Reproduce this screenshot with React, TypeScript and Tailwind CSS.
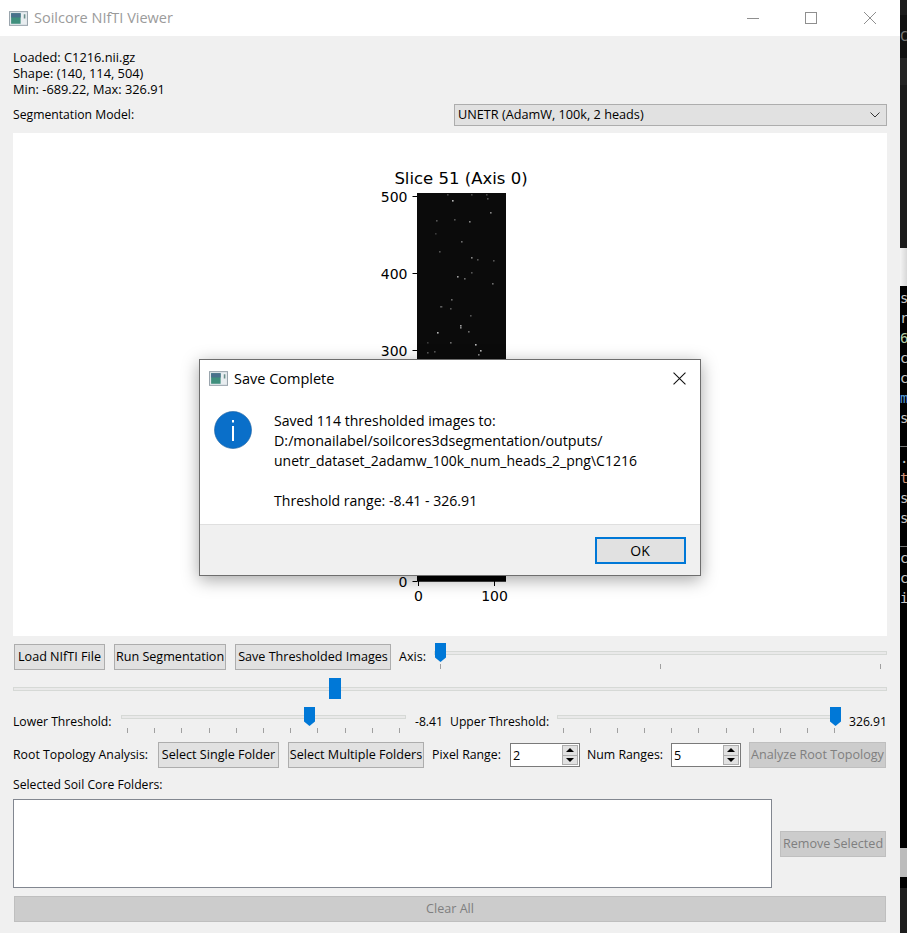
const ui = "font-['Open_Sans','Noto_Sans',sans-serif]";

const specks: [number, number, number][] = [
  [452, 200, 0.7], [447, 194, 0.25], [471, 194, 0.25], [487, 198, 0.3], [486, 194, 0.25],
  [490, 212, 0.5], [469, 221, 0.5], [436, 220, 0.3], [454, 219, 0.3], [461, 241, 0.4],
  [471, 257, 0.5], [435, 233, 0.2], [439, 251, 0.3], [477, 259, 0.3], [493, 260, 0.3],
  [457, 276, 0.6], [464, 278, 0.4], [471, 272, 0.3], [492, 283, 0.4], [440, 306, 0.3],
  [450, 308, 0.3], [451, 299, 0.4], [470, 315, 0.3], [460, 325, 0.6], [437, 332, 0.7],
  [468, 331, 0.4], [450, 342, 0.4], [475, 344, 0.7], [480, 350, 0.7], [478, 354, 0.5],
  [434, 351, 0.3], [427, 352, 0.3], [427, 342, 0.2], [460, 327, 0.5], [441, 306, 0.2],
];

const stripGlyphs = [
  ["s", "#c8c8c8"], ["r", "#c8c8c8"], ["6", "#b5cea8"], ["c", "#c8c8c8"],
  ["c", "#c8c8c8"], ["m", "#569cd6"], ["s", "#c8c8c8"], ["_", "#c8c8c8"],
  [".", "#c8c8c8"], ["t", "#ce9178"], ["s", "#c8c8c8"], ["s", "#c8c8c8"],
  ["_", "#c8c8c8"], ["c", "#c8c8c8"], ["c", "#c8c8c8"], ["i", "#c8c8c8"],
];

function WinIcon({ className }: { className: string }) {
  return (
    <svg viewBox="0 0 18 14" className={className}>
      <rect x="0.5" y="0.5" width="17" height="13" fill="#e8edf0" stroke="#9aa5ad" />
      <rect x="2" y="2" width="9" height="10" fill="#3f8f7d" />
      <rect x="2" y="2" width="9" height="4" fill="#49708c" />
      <rect x="14" y="3" width="1.5" height="4" fill="#6b8f8a" />
    </svg>
  );
}

function Plot() {
  const yTicks = [[196, "500"], [273, "400"], [350, "300"], [581, "0"]] as const;
  return (
    <svg className="block w-full h-[503px]" viewBox="13 133 874 503">
      <g fontFamily="'DejaVu Sans', sans-serif" fill="#000">
        <text x="461" y="184" fontSize="16.5" textAnchor="middle">Slice 51 (Axis 0)</text>
        <rect x="417" y="193" width="89" height="388.5" fill="#0b0b0b" />
        <rect x="417" y="575" width="89" height="6.5" fill="#000" />
        {specks.map(([x, y, o], i) => (
          <rect key={i} x={x} y={y} width="1.6" height="1.6" fill="#fff" opacity={o} />
        ))}
        {yTicks.map(([y, t]) => (
          <g key={t}>
            <line x1="412.5" x2="417" y1={y + 0.5} y2={y + 0.5} stroke="#000" />
            <text x="407.5" y={y + 6} fontSize="14" textAnchor="end">{t}</text>
          </g>
        ))}
        <line x1="418.5" x2="418.5" y1="581" y2="586" stroke="#000" />
        <line x1="494.5" x2="494.5" y1="581" y2="586" stroke="#000" />
        <text x="418.5" y="601" fontSize="14" textAnchor="middle">0</text>
        <text x="494.5" y="601" fontSize="14" textAnchor="middle">100</text>
      </g>
    </svg>
  );
}

function Btn({ label, className = "" }: { label: string; className?: string }) {
  return (
    <button className={`h-[26px] pt-px shrink-0 border border-[#adadad] bg-[#e1e1e1] text-[12.6px] text-black whitespace-nowrap ${className}`}>
      {label}
    </button>
  );
}

function DisabledBtn({ label, className = "" }: { label: string; className?: string }) {
  return (
    <button className={`h-[26px] pt-px shrink-0 border border-[#bfbfbf] bg-[#cccccc] text-[12.6px] text-[#7f7f7f] whitespace-nowrap ${className}`}>
      {label}
    </button>
  );
}

function Handle({ className = "" }: { className?: string }) {
  return (
    <svg viewBox="0 0 11 19" className={`w-[11px] h-[19px] ${className}`}>
      <path d="M0 0H11V14.5L5.5 19L0 14.5Z" fill="#0078d7" />
    </svg>
  );
}

function TickSlider({ ticks, handle, className = "" }: { ticks: number; handle: string; className?: string }) {
  return (
    <div className={`relative h-[28px] shrink-0 ${className}`}>
      <div className="mt-[8px] h-[4px] border border-[#d6d9d6] bg-[#e9e9e9]" />
      <div className="mt-[9px] flex justify-between px-[6px]">
        {Array.from(Array(ticks)).map((v, i) => (
          <span key={i} className="block w-px h-[5px] bg-[#a0a0a0]" />
        ))}
      </div>
      <Handle className={`absolute top-0 ${handle}`} />
    </div>
  );
}

function Spin({ value, className = "" }: { value: string; className?: string }) {
  return (
    <div className={`h-[24px] flex items-stretch border border-[#7a7a7a] bg-white ${className}`}>
      <span className="flex-1 pl-[2px] pt-px text-[12.6px] leading-[22px] text-black">{value}</span>
      <div className="w-[16px] flex flex-col my-[1px] mr-[1px] border border-[#adadad] bg-[#e1e1e1] divide-y divide-[#adadad]">
        <div className="flex-1 flex items-center justify-center">
          <svg viewBox="0 0 8 4" className="w-[8px] h-[4px]"><path d="M4 0L8 4H0Z" fill="#000" /></svg>
        </div>
        <div className="flex-1 flex items-center justify-center">
          <svg viewBox="0 0 8 4" className="w-[8px] h-[4px]"><path d="M0 0H8L4 4Z" fill="#000" /></svg>
        </div>
      </div>
    </div>
  );
}

function SaveDialog() {
  return (
    <div className="absolute left-[199px] top-[359px] w-[502px] h-[217px] flex flex-col border border-[#6e6e6e] bg-white shadow-[0_4px_16px_rgba(0,0,0,0.35)]">
      <div className="h-[37px] flex items-center pl-[9px] pr-[14px] shrink-0">
        <WinIcon className="w-[19px] h-[15px]" />
        <span className="ml-[6px] text-[14.5px] text-black">Save Complete</span>
        <svg viewBox="0 0 12 12" className="ml-auto w-[13px] h-[13px]">
          <path d="M0.5 0.5L11.5 11.5M11.5 0.5L0.5 11.5" stroke="#111" fill="none" />
        </svg>
      </div>
      <div className="flex-1 flex pl-[14px] pt-[14px]">
        <svg viewBox="0 0 38 38" className="w-[38px] h-[38px] shrink-0">
          <circle cx="19" cy="19" r="18.5" fill="#0a6fc9" stroke="#1b5f9f" strokeWidth="0.6" />
          <rect x="18" y="15" width="2" height="15" fill="#fff" />
          <rect x="18" y="9" width="2" height="2.5" fill="#fff" />
        </svg>
        <div className="ml-[22px] text-[14.1px] leading-[20px] text-black whitespace-pre">
          <div>Saved 114 thresholded images to:</div>
          <div className="text-[14.3px]">D:/monailabel/soilcores3dsegmentation/outputs/</div>
          <div className="text-[14px]">unetr_dataset_2adamw_100k_num_heads_2_png\C1216</div>
          <div className="h-[20px]" />
          <div>Threshold range: -8.41 - 326.91</div>
        </div>
      </div>
      <div className="h-[51px] shrink-0 flex items-center justify-end pr-[14px] border-t border-[#dfdfdf] bg-[#f0f0f0]">
        <button className="w-[91px] h-[27px] pr-px border-2 border-[#0078d7] bg-[#e1e1e1] text-[14px] text-black">OK</button>
      </div>
    </div>
  );
}

function BackWindowStrip() {
  return (
    <div className="relative w-[7px] h-full flex flex-col bg-black overflow-hidden font-['DejaVu_Sans_Mono',monospace]">
      <div className="h-[15px] bg-[#1c1c1c]" />
      <div className="h-[43px] bg-[#111111] text-[14px] leading-[42px] text-[#777777]">C</div>
      <div className="h-[28px] bg-[#242424]" />
      <div className="h-[164px] bg-[#1b1b1b]" />
      <div className="h-[38px] bg-gradient-to-r from-[#f4f4f4] to-[#d8d8d8]" />
      <div className="h-[2px]" />
      {stripGlyphs.map(([ch, color], i) => (
        <div key={i} className="h-[20px] shrink-0 text-[14px] leading-[20px] whitespace-pre" style={{ color }}>{ch}</div>
      ))}
      <div className="h-[240px] shrink-0 bg-black" />
      <div className="h-[29px] shrink-0 bg-[#bcbcbc]" />
      <div className="h-[11px] shrink-0 bg-black" />
      <div className="h-[45px] shrink-0 bg-[#1e1e1e]" />
    </div>
  );
}

export default function App() {
  return (
    <div className={`relative w-[907px] h-[933px] overflow-hidden flex bg-black ${ui}`}>
      <div className="w-[900px] h-full flex flex-col bg-[#f0f0f0]">
        <div className="h-[36px] shrink-0 flex items-center bg-white pl-[9px]">
          <WinIcon className="w-[19px] h-[15px]" />
          <span className="ml-[6px] text-[14.5px] text-[#9b9b9b]">Soilcore NIfTI Viewer</span>
          <div className="ml-auto flex items-center">
            <span className="block w-[12px] h-px bg-[#8f8f8f] mr-[46px]" />
            <span className="block w-[12px] h-[12px] border border-[#8f8f8f] mr-[47px]" />
            <svg viewBox="0 0 12 12" className="w-[12px] h-[12px] mr-[24px]">
              <path d="M0 0L12 12M12 0L0 12" stroke="#8f8f8f" fill="none" />
            </svg>
          </div>
        </div>
        <div className="flex-1 flex flex-col pl-[13px] pr-[13px]">
          <div className="pt-[13px] text-[12.8px] leading-[16px] text-black">
            <div>Loaded: C1216.nii.gz</div>
            <div>Shape: (140, 114, 504)</div>
            <div>Min: -689.22, Max: 326.91</div>
          </div>
          <div className="mt-[7px] h-[22px] flex items-center justify-between">
            <span className="text-[12.2px] text-black">Segmentation Model:</span>
            <div className="w-[433px] h-[22px] flex items-center justify-between border border-[#adadad] bg-[#e1e1e1] pl-[3px] pr-[6px] text-[12.7px] text-black">
              <span>UNETR (AdamW, 100k, 2 heads)</span>
              <svg viewBox="0 0 10 6" className="w-[10px] h-[6px]"><path d="M0.5 0.5L5 5L9.5 0.5" stroke="#333" fill="none" /></svg>
            </div>
          </div>
          <div className="mt-[7px] bg-white"><Plot /></div>

          <div className="mt-[8px] h-[26px] flex items-center">
            <Btn label="Load NIfTI File" className="ml-px w-[91px]" />
            <Btn label="Run Segmentation" className="ml-[9px] w-[112px]" />
            <Btn label="Save Thresholded Images" className="ml-[9px] w-[156px]" />
            <span className="ml-[8px] pt-px text-[12.6px] text-black">Axis:</span>
            <TickSlider ticks={3} handle="left-px" className="ml-auto w-[453px]" />
          </div>
          <div className="relative mt-[8px] h-[21px] flex items-center">
            <div className="w-full h-[4px] border border-[#d6d9d6] bg-[#e9e9e9]" />
            <span className="absolute left-[316px] top-0 w-[12px] h-[21px] bg-[#0078d7]" />
          </div>
          <div className="mt-[8px] h-[28px] flex items-center text-[12.2px] text-black">
            <span className="w-[108px] shrink-0 pt-[2px]">Lower Threshold:</span>
            <TickSlider ticks={11} handle="left-[183px]" className="w-[285px]" />
            <span className="ml-[7px] w-[30px] text-right pt-[2px]">-8.41</span>
            <span className="ml-[7px] w-[107px] shrink-0 pt-[2px]">Upper Threshold:</span>
            <TickSlider ticks={11} handle="right-0" className="w-[284px]" />
            <span className="ml-auto pt-[2px]">326.91</span>
          </div>
          <div className="mt-[7px] h-[26px] flex items-center text-[12.3px] text-black">
            <span className="w-[145px] shrink-0 pt-px">Root Topology Analysis:</span>
            <Btn label="Select Single Folder" className="w-[121px]" />
            <Btn label="Select Multiple Folders" className="ml-[9px] w-[136px]" />
            <span className="ml-[8px] w-[68px] shrink-0 whitespace-nowrap pt-px">Pixel Range:</span>
            <Spin value="2" className="ml-[10px] w-[70px]" />
            <span className="ml-[7px] w-[76px] shrink-0 whitespace-nowrap pt-px">Num Ranges:</span>
            <Spin value="5" className="ml-[8px] w-[70px]" />
            <DisabledBtn label="Analyze Root Topology" className="ml-auto mr-px w-[137px]" />
          </div>
          <div className="mt-[9px] h-[16px] leading-[16px] text-[12.2px] text-black">Selected Soil Core Folders:</div>
          <div className="mt-[6px] flex items-center">
            <div className="w-[759px] h-[89px] border border-[#828790] bg-white" />
            <DisabledBtn label="Remove Selected" className="ml-[8px] w-[106px]" />
          </div>
          <DisabledBtn label="Clear All" className="mt-[8px] ml-px w-[872px]" />
        </div>
      </div>
      <BackWindowStrip />
      <SaveDialog />
    </div>
  );
}
